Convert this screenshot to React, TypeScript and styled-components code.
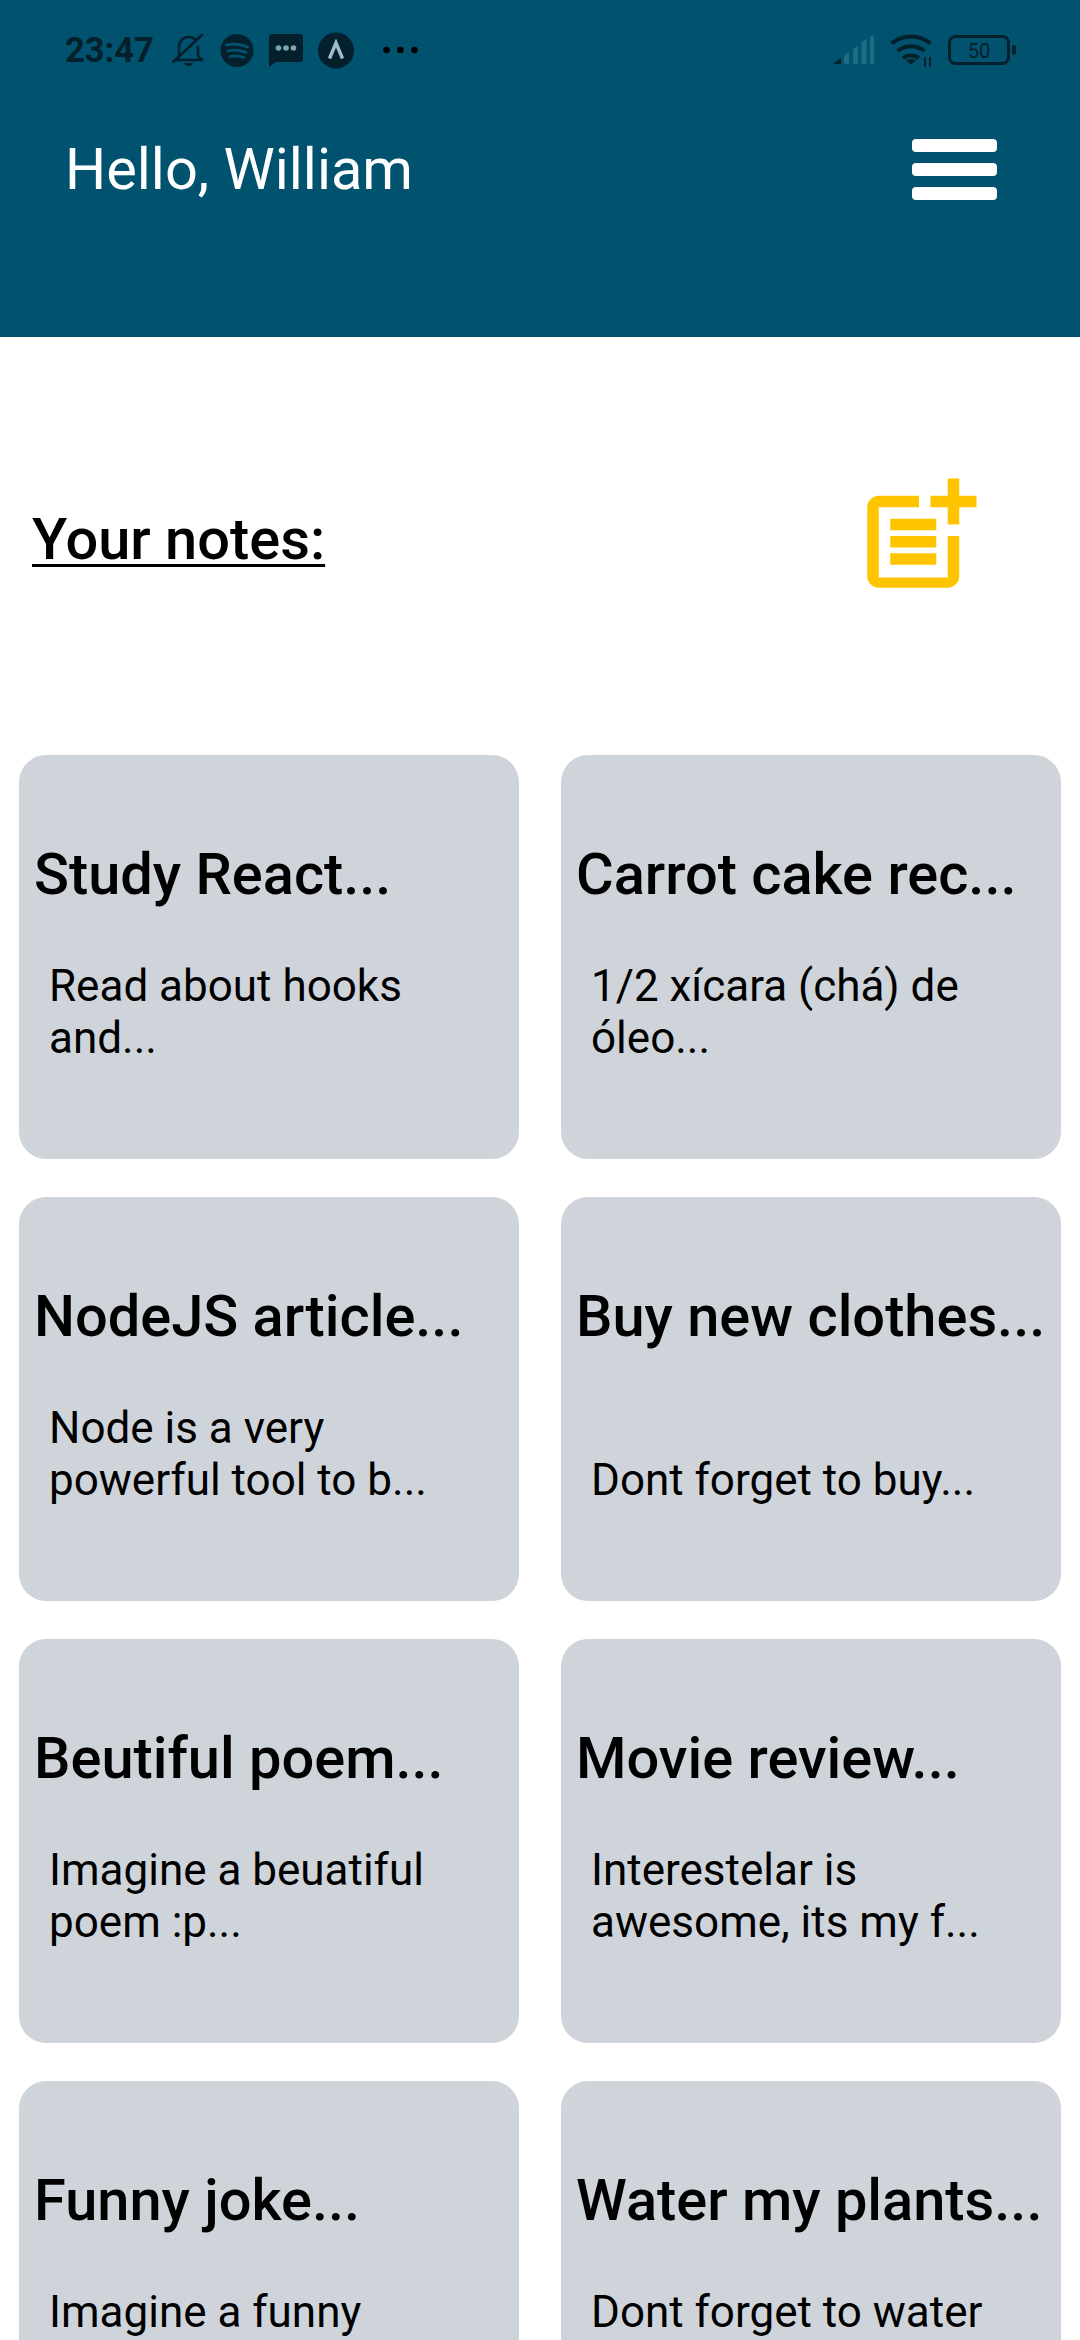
import React, { ReactElement } from 'react';
import styled, { createGlobalStyle } from 'styled-components';
import { MdPostAdd } from 'react-icons/md';

const GlobalStyle = createGlobalStyle`
  html, body {
    margin: 0;
    padding: 0;
    height: 2340px;
    overflow: hidden;
    background: #fff;
    font-family: Roboto, sans-serif;
  }
`;

const dark = '#03202c';

const Header = styled.header`
  height: 337px;
  box-sizing: border-box;
  background: #01526e;
  padding-top: 31px;
`;

const StatusBar = styled.div`
  display: flex;
  align-items: center;
  justify-content: space-between;
  height: 38px;
  padding: 0 64px 0 65px;
`;

const StatusGroup = styled.div`
  display: flex;
  align-items: center;
`;

const Time = styled.span`
  width: 107px;
  color: ${dark};
  font-size: 34.5px;
  font-weight: 700;
`;

const Greeting = styled.div`
  display: flex;
  align-items: center;
  justify-content: space-between;
  margin-top: 67px;
  padding: 0 83px 0 65px;
`;

const Hello = styled.h1`
  margin: 0;
  color: #fff;
  font-size: 57.75px;
  font-weight: 400;
  line-height: 66px;
`;

const Burger = styled.button`
  display: flex;
  flex-direction: column;
  gap: 11px;
  padding: 0;
  border: 0;
  background: none;
`;

const BurgerBar = styled.span`
  display: block;
  width: 85px;
  height: 13px;
  border-radius: 4px;
  background: #fff;
`;

const TitleRow = styled.div`
  display: flex;
  align-items: center;
  justify-content: space-between;
  height: 138px;
  margin-top: 130px;
  padding: 0 92px 0 32px;
`;

const NotesTitle = styled.h2`
  margin: 6px 0 0;
  color: #000;
  font-size: 57.75px;
  font-weight: 500;
  text-decoration: underline;
  text-decoration-thickness: 3px;
  text-underline-offset: 5px;
`;

const AddButton = styled.button`
  display: flex;
  padding: 0;
  border: 0;
  background: none;
  color: #ffc400;
`;

const Grid = styled.div`
  display: grid;
  grid-template-columns: 500px 500px;
  column-gap: 42px;
  row-gap: 38px;
  margin-top: 150px;
  padding: 0 19px;
`;

const Card = styled.article`
  height: 404px;
  box-sizing: border-box;
  padding: 87px 0 0 15px;
  border-radius: 27px;
  background: #cfd4da;
`;

const CardTitle = styled.h3`
  margin: 0;
  color: #000;
  font-size: 57.75px;
  font-weight: 500;
  line-height: 64px;
  white-space: nowrap;
`;

const CardBody = styled.p`
  display: flex;
  align-items: flex-end;
  box-sizing: border-box;
  width: 434px;
  height: 104px;
  margin: 54px 0 0;
  padding-left: 15px;
  color: #000;
  font-size: 44px;
  font-weight: 400;
  line-height: 52px;
`;

const notes = [
  { title: 'Study React...', body: 'Read about hooks and...' },
  { title: 'Carrot cake rec...', body: '1/2 xícara (chá) de óleo...' },
  { title: 'NodeJS article...', body: 'Node is a very powerful tool to b...' },
  { title: 'Buy new clothes...', body: 'Dont forget to buy...' },
  { title: 'Beutiful poem...', body: 'Imagine a beuatiful poem :p...' },
  { title: 'Movie review...', body: 'Interestelar is awesome, its my f...' },
  { title: 'Funny joke...', body: 'Imagine a funny joke...' },
  { title: 'Water my plants...', body: 'Dont forget to water my plants...' },
];

const MutedBell = () => (
  <svg width="33" height="34" viewBox="0 0 33 34" fill="none" stroke={dark} strokeWidth="2.6">
    <path d="M7 22V14c0-6 4-10 10-10 3 0 5 1 7 3" />
    <path d="M26 13v8c0 3 2 5 5 6H3c2-.5 3-1.500 4-3" />
    <path d="M1 29 30 2" strokeLinecap="round" />
    <path d="M12 30c1 4 8 4 9 0z" fill={dark} stroke="none" />
  </svg>
);

const SpotifyIcon = () => (
  <svg width="34" height="35" viewBox="0 0 34 35">
    <circle cx="17" cy="17.500" r="16.500" fill={dark} />
    <g fill="none" stroke="#01526e" strokeWidth="2.800" strokeLinecap="round">
      <path d="M6.500 12c7-1.500 14-1 21 2" />
      <path d="M8 18c6-1.500 12-1 18 1.500" />
      <path d="M10 23.500c4.500-1 9-.8 14 1" />
    </g>
  </svg>
);

const MessageIcon = () => (
  <svg width="34" height="33" viewBox="0 0 34 33">
    <path d="M2 0h30a2 2 0 0 1 2 2v24a2 2 0 0 1-2 2H7l-7 5V2a2 2 0 0 1 2-2z" fill={dark} />
    <circle cx="9.500" cy="14" r="2.800" fill="#7ba3b2" />
    <circle cx="17" cy="14" r="2.800" fill="#7ba3b2" />
    <circle cx="24.500" cy="14" r="2.800" fill="#7ba3b2" />
  </svg>
);

const ArrowIcon = () => (
  <svg width="36" height="37" viewBox="0 0 36 37">
    <circle cx="18" cy="18.500" r="18" fill={dark} />
    <path d="M11.500 26.500 18 11l6.500 15.500" fill="none" stroke="#9fbdca" strokeWidth="3.400" />
  </svg>
);

const MoreDots = () => (
  <svg width="35" height="8" viewBox="0 0 35 8" fill="#000">
    <circle cx="3.500" cy="4" r="3.300" />
    <circle cx="17.500" cy="4" r="3.300" />
    <circle cx="31.500" cy="4" r="3.300" />
  </svg>
);

const SignalIcon = () => (
  <svg width="41" height="30" viewBox="0 0 41 30">
    <path d="M0 29 8 23v6z" fill={dark} />
    <g fill="#1f6a85">
      <path d="M11 20.500l5-3.500v12h-5z" />
      <path d="M20 14l5-3.500V29h-5z" />
      <path d="M28.500 7.500l5-3.500v25h-5z" />
      <path d="M37 2l4-2v29h-4z" />
    </g>
  </svg>
);

const WifiIcon = () => (
  <svg width="44" height="33" viewBox="0 0 44 33" fill="none" stroke={dark} strokeWidth="4">
    <path d="M1.500 9.500c11-9.500 28-9.500 39 0" />
    <path d="M7.500 17c8-6.500 19-6.500 27 0" />
    <path d="M13 24c4.500-3.500 11-3.500 16 0" />
    <path d="M21 30.500 16 26.500c3-2 7-2 10 0z" fill={dark} stroke="none" />
    <path d="M35 33V23M40 33V23" strokeWidth="2" />
  </svg>
);

const BatteryIcon = () => (
  <svg width="68" height="30" viewBox="0 0 68 30">
    <rect x="1.500" y="1.500" width="59" height="27" rx="6" fill="none" stroke={dark} strokeWidth="3" />
    <rect x="64" y="10" width="4" height="10" rx="2" fill={dark} />
    <text x="31" y="23" textAnchor="middle" fontFamily="Roboto, sans-serif" fontSize="20" fill={dark}>50</text>
  </svg>
);

const IconSlot = styled.span<{ $gap: number }>`
  display: flex;
  margin-left: ${({ $gap }) => $gap}px;
`;

const App = (): ReactElement => {
  return (
    <>
      <GlobalStyle />
      <Header>
        <StatusBar>
          <StatusGroup>
            <Time>23:47</Time>
            <MutedBell />
            <IconSlot $gap={15}><SpotifyIcon /></IconSlot>
            <IconSlot $gap={15}><MessageIcon /></IconSlot>
            <IconSlot $gap={15}><ArrowIcon /></IconSlot>
            <IconSlot $gap={29}><MoreDots /></IconSlot>
          </StatusGroup>
          <StatusGroup>
            <SignalIcon />
            <IconSlot $gap={16}><WifiIcon /></IconSlot>
            <IconSlot $gap={14}><BatteryIcon /></IconSlot>
          </StatusGroup>
        </StatusBar>
        <Greeting>
          <Hello>Hello, William</Hello>
          <Burger aria-label="Menu">
            <BurgerBar />
            <BurgerBar />
            <BurgerBar />
          </Burger>
        </Greeting>
      </Header>
      <TitleRow>
        <NotesTitle>Your notes:</NotesTitle>
        <AddButton aria-label="Add note">
          <MdPostAdd size={138} />
        </AddButton>
      </TitleRow>
      <Grid>
        {notes.map(note => (
          <Card key={note.title}>
            <CardTitle>{note.title}</CardTitle>
            <CardBody>
              <span>{note.body}</span>
            </CardBody>
          </Card>
        ))}
      </Grid>
    </>
  );
};

export default App;
